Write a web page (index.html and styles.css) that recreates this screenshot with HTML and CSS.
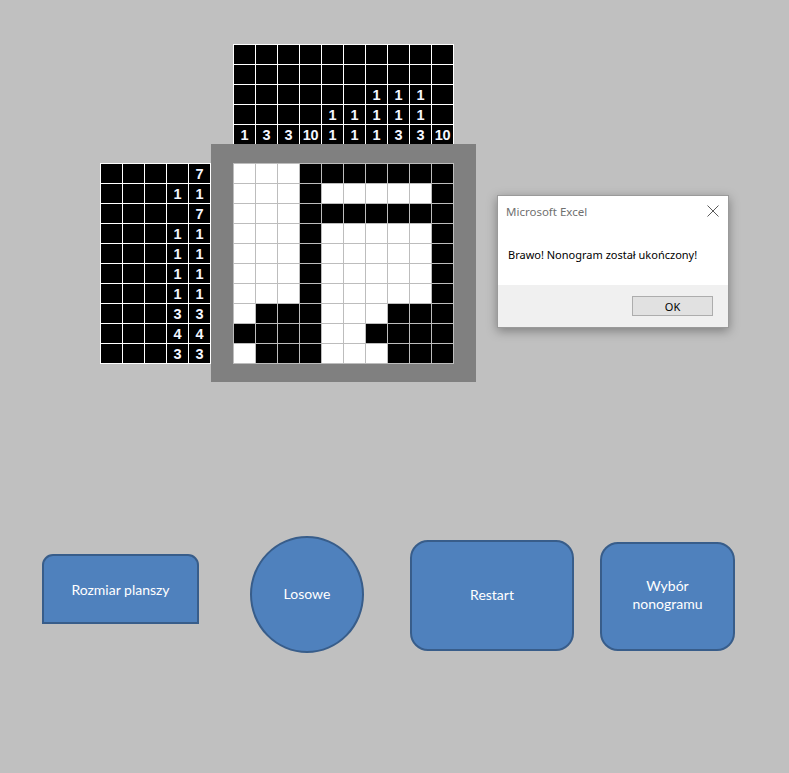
FILE: index.html
```html
<!DOCTYPE html>
<html lang="pl">
<head>
<meta charset="utf-8">
<title>Nonogram</title>
<link rel="stylesheet" href="styles.css">
</head>
<body>
<div class="sheet">
  <div class="puzzle">
    <div class="top-clues">
      <div class="c"></div><div class="c"></div><div class="c"></div><div class="c"></div><div class="c"></div><div class="c"></div><div class="c"></div><div class="c"></div><div class="c"></div><div class="c"></div>
      <div class="c"></div><div class="c"></div><div class="c"></div><div class="c"></div><div class="c"></div><div class="c"></div><div class="c"></div><div class="c"></div><div class="c"></div><div class="c"></div>
      <div class="c"></div><div class="c"></div><div class="c"></div><div class="c"></div><div class="c"></div><div class="c"></div><div class="c">1</div><div class="c">1</div><div class="c">1</div><div class="c"></div>
      <div class="c"></div><div class="c"></div><div class="c"></div><div class="c"></div><div class="c">1</div><div class="c">1</div><div class="c">1</div><div class="c">1</div><div class="c">1</div><div class="c"></div>
      <div class="c">1</div><div class="c">3</div><div class="c">3</div><div class="c">10</div><div class="c">1</div><div class="c">1</div><div class="c">1</div><div class="c">3</div><div class="c">3</div><div class="c">10</div>
    </div>
    <div class="left-clues">
      <div class="c"></div><div class="c"></div><div class="c"></div><div class="c"></div><div class="c">7</div>
      <div class="c"></div><div class="c"></div><div class="c"></div><div class="c">1</div><div class="c">1</div>
      <div class="c"></div><div class="c"></div><div class="c"></div><div class="c"></div><div class="c">7</div>
      <div class="c"></div><div class="c"></div><div class="c"></div><div class="c">1</div><div class="c">1</div>
      <div class="c"></div><div class="c"></div><div class="c"></div><div class="c">1</div><div class="c">1</div>
      <div class="c"></div><div class="c"></div><div class="c"></div><div class="c">1</div><div class="c">1</div>
      <div class="c"></div><div class="c"></div><div class="c"></div><div class="c">1</div><div class="c">1</div>
      <div class="c"></div><div class="c"></div><div class="c"></div><div class="c">3</div><div class="c">3</div>
      <div class="c"></div><div class="c"></div><div class="c"></div><div class="c">4</div><div class="c">4</div>
      <div class="c"></div><div class="c"></div><div class="c"></div><div class="c">3</div><div class="c">3</div>
    </div>
    <div class="frame">
      <div class="board">
        <div class="w"></div><div class="w"></div><div class="w"></div><div class="b"></div><div class="b"></div><div class="b"></div><div class="b"></div><div class="b"></div><div class="b"></div><div class="b"></div>
        <div class="w"></div><div class="w"></div><div class="w"></div><div class="b"></div><div class="w"></div><div class="w"></div><div class="w"></div><div class="w"></div><div class="w"></div><div class="b"></div>
        <div class="w"></div><div class="w"></div><div class="w"></div><div class="b"></div><div class="b"></div><div class="b"></div><div class="b"></div><div class="b"></div><div class="b"></div><div class="b"></div>
        <div class="w"></div><div class="w"></div><div class="w"></div><div class="b"></div><div class="w"></div><div class="w"></div><div class="w"></div><div class="w"></div><div class="w"></div><div class="b"></div>
        <div class="w"></div><div class="w"></div><div class="w"></div><div class="b"></div><div class="w"></div><div class="w"></div><div class="w"></div><div class="w"></div><div class="w"></div><div class="b"></div>
        <div class="w"></div><div class="w"></div><div class="w"></div><div class="b"></div><div class="w"></div><div class="w"></div><div class="w"></div><div class="w"></div><div class="w"></div><div class="b"></div>
        <div class="w"></div><div class="w"></div><div class="w"></div><div class="b"></div><div class="w"></div><div class="w"></div><div class="w"></div><div class="w"></div><div class="w"></div><div class="b"></div>
        <div class="w"></div><div class="b"></div><div class="b"></div><div class="b"></div><div class="w"></div><div class="w"></div><div class="w"></div><div class="b"></div><div class="b"></div><div class="b"></div>
        <div class="b"></div><div class="b"></div><div class="b"></div><div class="b"></div><div class="w"></div><div class="w"></div><div class="b"></div><div class="b"></div><div class="b"></div><div class="b"></div>
        <div class="w"></div><div class="b"></div><div class="b"></div><div class="b"></div><div class="w"></div><div class="w"></div><div class="w"></div><div class="b"></div><div class="b"></div><div class="b"></div>
      </div>
    </div>
  </div>

  <div class="controls">
    <div class="shape tab">Rozmiar planszy</div>
    <div class="shape circle">Losowe</div>
    <div class="shape restart">Restart</div>
    <div class="shape choose">Wybór<br>nonogramu</div>
  </div>

  <div class="dialog">
    <div class="dlg-head">
      <span class="dlg-title">Microsoft Excel</span>
      <svg class="dlg-close" width="12" height="12" viewBox="0 0 12 12"><path d="M0.5 0.5 L11.5 11.5 M11.5 0.5 L0.5 11.5" stroke="#5a5a5a" stroke-width="1" fill="none"/></svg>
    </div>
    <div class="dlg-body">Brawo! Nonogram został ukończony!</div>
    <div class="dlg-foot"><div class="dlg-btn">OK</div></div>
  </div>
</div>
</body>
</html>
```

FILE: styles.css
```css
* { box-sizing: border-box; }
html, body { margin: 0; padding: 0; }
body {
  background: #c0c0c0;
  width: 789px;
  height: 773px;
  overflow: hidden;
}
.sheet {
  position: relative;
  width: 789px;
  height: 773px;
  padding-top: 44px;
}
.puzzle {
  display: grid;
  grid-template-columns: 111px 265px;
  grid-template-rows: 100px 238px;
  margin-left: 100px;
}
.top-clues, .left-clues {
  display: grid;
  gap: 1px;
  background: #ffffff;
  font-family: "Liberation Sans", Arial, sans-serif;
  font-weight: bold;
  font-size: 14.5px;
  color: #f4f6ff;
}
.top-clues {
  grid-column: 2;
  grid-row: 1;
  margin-left: 22px;
  width: 221px;
  grid-template-columns: repeat(10, 21px);
  grid-template-rows: repeat(5, 19px);
  padding: 1px 1px 0 1px;
}
.left-clues {
  grid-column: 1;
  grid-row: 2;
  margin-top: 19px;
  align-self: start;
  grid-template-columns: repeat(5, 21px);
  grid-template-rows: repeat(10, 19px);
  padding: 1px;
  width: 111px;
}
.c {
  background: #000;
  text-align: center;
  line-height: 19px;
  padding-top: 1px;
  letter-spacing: -0.3px;
}
.frame {
  grid-column: 2;
  grid-row: 2;
  background: #808080;
  padding: 19px 22px 18px 22px;
}
.board {
  display: grid;
  grid-template-columns: repeat(10, 21px);
  grid-template-rows: repeat(10, 19px);
  gap: 1px;
  padding: 1px;
  background: #bdbdbd;
  width: 221px;
}
.w { background: #ffffff; }
.b { background: #000000; }

.controls {
  display: flex;
  align-items: flex-start;
  margin-top: 154px;
  padding-left: 42px;
}
.shape {
  display: flex;
  align-items: center;
  justify-content: center;
  text-align: center;
  background: #4f81bd;
  border: 2.5px solid #385d8a;
  color: #ffffff;
  font-family: Lato, "Open Sans", sans-serif;
  font-size: 14px;
  line-height: 18px;
  padding-bottom: 1px;
}
.tab {
  width: 157px;
  height: 70px;
  margin-top: 18px;
  border-radius: 11px 11px 0 0;
  padding-top: 3px;
}
.circle {
  width: 114px;
  height: 117px;
  margin-left: 51px;
  border-radius: 50%;
}
.restart {
  width: 164px;
  height: 111px;
  margin-left: 46px;
  margin-top: 4px;
  border-radius: 18px;
}
.choose {
  width: 135px;
  height: 109px;
  margin-left: 26px;
  margin-top: 6px;
  border-radius: 18px;
  padding-bottom: 3px;
}

.dialog {
  position: absolute;
  left: 497px;
  top: 195px;
  width: 232px;
  height: 133px;
  background: #ffffff;
  border: 1px solid #9a9a9a;
  box-shadow: 0 3px 10px rgba(0, 0, 0, 0.35);
  display: flex;
  flex-direction: column;
  font-family: "Noto Sans", "Open Sans", sans-serif;
  font-size: 11px;
}
.dlg-head {
  height: 30px;
  display: flex;
  align-items: center;
  justify-content: space-between;
  padding: 0 9px 0 8px;
}
.dlg-title {
  color: #707070;
  font-size: 11.5px;
}
.dlg-body {
  flex: 1;
  display: flex;
  align-items: center;
  padding-left: 10px;
  color: #000;
  padding-bottom: 3px;
}
.dlg-foot {
  height: 42px;
  background: #f0f0f0;
  display: flex;
  align-items: center;
  justify-content: flex-end;
  padding-right: 15px;
}
.dlg-btn {
  width: 81px;
  height: 20px;
  background: #e1e1e1;
  border: 1px solid #adadad;
  display: flex;
  align-items: center;
  justify-content: center;
  color: #000;
}
```
